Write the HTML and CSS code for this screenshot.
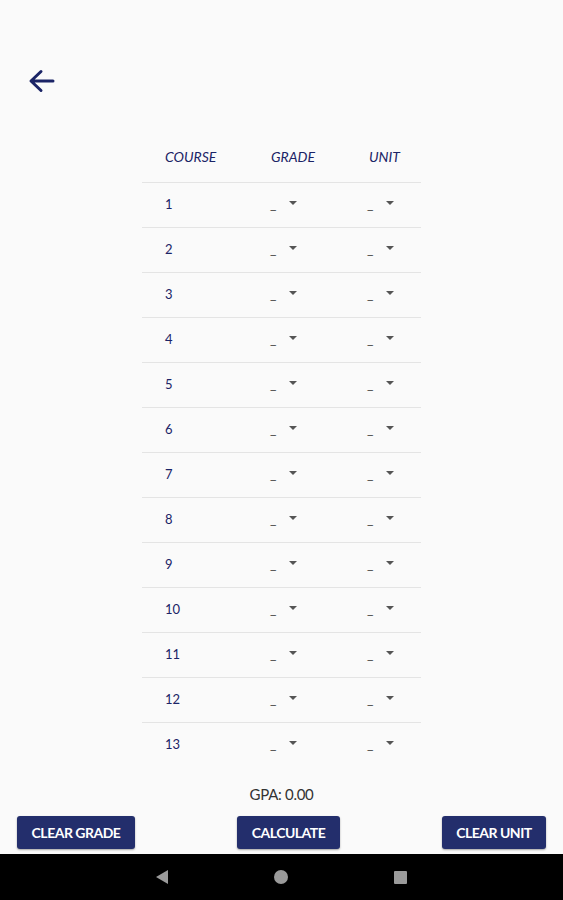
FILE: index.html
```html
<!DOCTYPE html>
<html lang="en">
<head>
    <meta charset="UTF-8">
    <meta name="viewport" content="width=device-width, initial-scale=1.0">
    <title>GPA Calculator</title>
    <link rel="stylesheet" href="styles.css">
</head>
<body>

    <div class="screen">
        <div class="status-bar"></div>

        <div class="toolbar">
            <button class="back" aria-label="Back">
                <svg width="28" height="26" viewBox="0 0 28 26">
                    <path d="M26 13H4.5M14 3.5L4 13l10 9.5" fill="none" stroke="#1b2466" stroke-width="3" stroke-linecap="round" stroke-linejoin="round"/>
                </svg>
            </button>
        </div>

        <div class="table" id="table">
            <div class="row head">
                <span>COURSE</span>
                <span>GRADE</span>
                <span>UNIT</span>
            </div>
        </div>

        <div class="gpa" id="gpa">GPA: 0.00</div>

        <div class="actions">
            <button class="btn" id="clearGrade">CLEAR GRADE</button>
            <button class="btn" id="calculate">CALCULATE</button>
            <button class="btn" id="clearUnit">CLEAR UNIT</button>
        </div>

        <div class="nav-bar">
            <span class="nav-back"></span>
            <span class="nav-home"></span>
            <span class="nav-recent"></span>
        </div>
    </div>

    <script>
        const table = document.getElementById('table');

        // Build the course rows
        for (let i = 1; i <= 13; i++) {
            const row = document.createElement('div');
            row.className = 'row';
            row.innerHTML =
                '<span class="num">' + i + '</span>' +
                '<span class="select"><span class="val">_</span><span class="caret"></span></span>' +
                '<span class="select"><span class="val">_</span><span class="caret"></span></span>';
            table.appendChild(row);
        }
    </script>

</body>
</html>
```

FILE: styles.css
```css
/* Global Styles */
* {
    margin: 0;
    padding: 0;
    box-sizing: border-box;
}

body {
    background-color: #fafafa;
    font-family: Lato, "Liberation Sans", sans-serif;
    color: #333;
}

.screen {
    display: flex;
    flex-direction: column;
    height: 900px;
}

.status-bar {
    height: 24px;
}

.toolbar {
    height: 106px;
    padding: 44px 0 0 27px;
}

.back {
    background: none;
    border: none;
    display: block;
    cursor: pointer;
}

/* Course table */
.table {
    width: 279px;
    margin: 0 auto;
}

.row {
    display: grid;
    grid-template-columns: 105px 97px 1fr;
    align-items: center;
    height: 45px;
    padding-left: 23px;
    border-top: 1px solid #e4e4e4;
    font-size: 13px;
}

.row.head {
    grid-template-columns: 106px 98px 1fr;
    height: 52px;
    border-top: none;
    font-style: italic;
    font-size: 14px;
    color: #1b2466;
}

.num {
    position: relative;
    top: -1px;
    color: #1b2466;
}

.select {
    display: flex;
    align-items: center;
    color: #444;
    font-size: 14px;
}

.val {
    position: relative;
    top: -2px;
    width: 19px;
}

.caret {
    width: 0;
    height: 0;
    border-left: 4px solid transparent;
    border-right: 4px solid transparent;
    border-top: 4px solid #555;
    margin-top: -4px;
}

.gpa {
    margin-top: 18px;
    text-align: center;
    font-size: 15px;
    color: #333;
    letter-spacing: -0.3px;
}

/* Bottom buttons */
.actions {
    display: flex;
    justify-content: space-between;
    padding: 0 17px;
    margin-top: 13px;
}

.btn {
    height: 33px;
    padding: 0 10px;
    background-color: #232e6c;
    color: #fff;
    border: none;
    border-radius: 3px;
    box-shadow: 0 1px 2px rgba(0, 0, 0, 0.35);
    font-family: Lato, "Liberation Sans", sans-serif;
    font-weight: bold;
    font-size: 14px;
    letter-spacing: -0.5px;
    cursor: pointer;
}

#clearGrade {
    width: 118px;
}

#calculate {
    width: 103px;
}

#clearUnit {
    width: 104px;
}

/* Android navigation bar */
.nav-bar {
    margin-top: auto;
    height: 46px;
    background-color: #000;
    display: flex;
    align-items: center;
    justify-content: center;
    gap: 106px;
}

.nav-back {
    width: 0;
    height: 0;
    border-top: 7px solid transparent;
    border-bottom: 7px solid transparent;
    border-right: 12px solid #9a9a9a;
}

.nav-home {
    width: 14px;
    height: 14px;
    border-radius: 50%;
    background-color: #9a9a9a;
}

.nav-recent {
    width: 13px;
    height: 13px;
    border-radius: 1px;
    background-color: #9a9a9a;
}
```
